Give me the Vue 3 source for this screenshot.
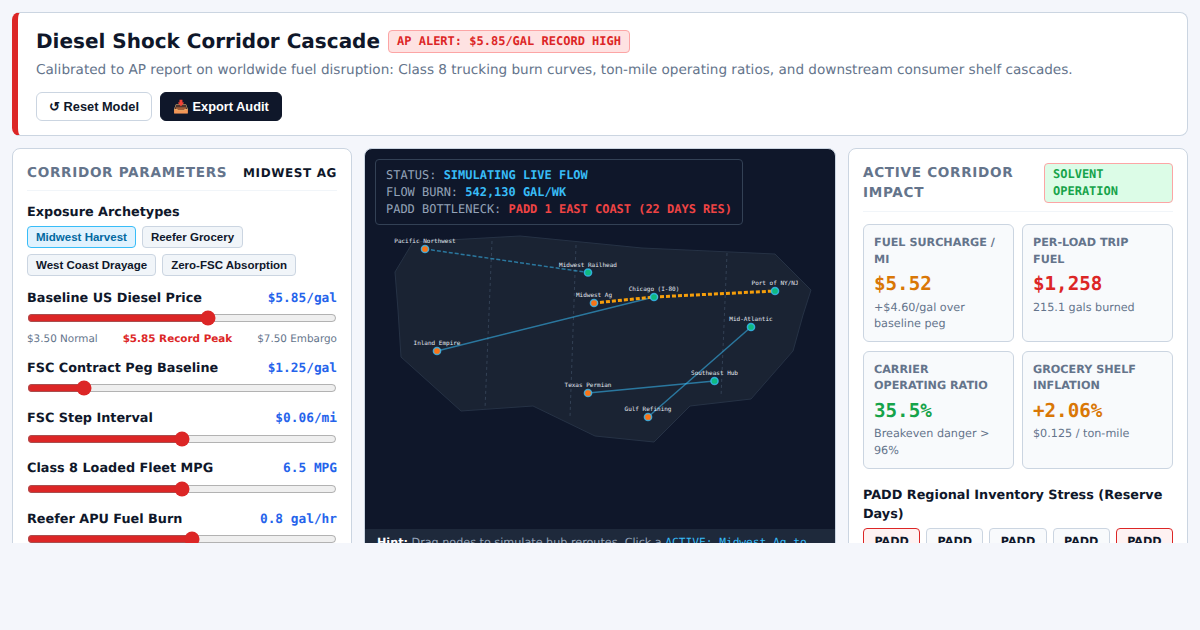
<script setup>
import { ref } from 'vue'

const W = 470
const H = 380

const chips = ['Midwest Harvest', 'Reefer Grocery', 'West Coast Drayage', 'Zero-FSC Absorption']
const activeChip = ref('Midwest Harvest')

const sliders = ref([
  { label: 'Baseline US Diesel Price', value: 5.85, min: 3.5, max: 7.5, step: 0.05, text: '$5.85/gal', scale: true },
  { label: 'FSC Contract Peg Baseline', value: 1.25, min: 1, max: 2.5, step: 0.05, text: '$1.25/gal' },
  { label: 'FSC Step Interval', value: 0.06, min: 0.02, max: 0.1, step: 0.01, text: '$0.06/mi' },
  { label: 'Class 8 Loaded Fleet MPG', value: 6.5, min: 5, max: 8, step: 0.1, text: '6.5 MPG' },
  { label: 'Reefer APU Fuel Burn', value: 0.8, min: 0, max: 1.5, step: 0.1, text: '0.8 gal/hr' },
])

const land = '30,123 48,93 155,87 277,99 410,105 446,141 438,166 428,202 386,250 325,257 289,293 230,287 168,257 96,262 36,208 33,161'
const padds = [
  [127, 92, 120, 260],
  [211, 96, 205, 268],
  [362, 104, 356, 248],
]

const nodes = {
  pnw: { name: 'Pacific Northwest', x: 60, y: 100, hub: false },
  rail: { name: 'Midwest Railhead', x: 223, y: 123.5, hub: true },
  ag: { name: 'Midwest Ag', x: 229, y: 154, hub: false },
  chi: { name: 'Chicago (I-80)', x: 289, y: 148, hub: true },
  port: { name: 'Port of NY/NJ', x: 410, y: 142, hub: true },
  mid: { name: 'Mid-Atlantic', x: 386, y: 178, hub: true },
  inland: { name: 'Inland Empire', x: 72, y: 202, hub: false },
  texas: { name: 'Texas Permian', x: 223, y: 244, hub: false },
  se: { name: 'Southeast Hub', x: 349.5, y: 232, hub: true },
  gulf: { name: 'Gulf Refining', x: 283, y: 268, hub: false },
}

const links = [
  { a: 'pnw', b: 'rail', kind: 'dashed' },
  { a: 'inland', b: 'chi', kind: 'solid' },
  { a: 'texas', b: 'se', kind: 'solid' },
  { a: 'gulf', b: 'mid', kind: 'solid' },
  { a: 'ag', b: 'chi', kind: 'hot' },
  { a: 'chi', b: 'port', kind: 'hot' },
]

const cards = [
  { label: 'Fuel Surcharge / mi', value: '$5.52', sub: '+$4.60/gal over baseline peg', tone: 'amber' },
  { label: 'Per-Load Trip Fuel', value: '$1,258', sub: '215.1 gals burned', tone: 'red' },
  { label: 'Carrier Operating Ratio', value: '35.5%', sub: 'Breakeven danger > 96%', tone: 'green' },
  { label: 'Grocery Shelf Inflation', value: '+2.06%', sub: '$0.125 / ton-mile', tone: 'amber' },
]

const padd = [
  { name: 'PADD 1', hot: true },
  { name: 'PADD 2', hot: false },
  { name: 'PADD 3', hot: false },
  { name: 'PADD 4', hot: false },
  { name: 'PADD 5', hot: true },
]
</script>

<template>
  <div class="page">
    <header class="hero">
      <div class="hero-title">
        <h1>Diesel Shock Corridor Cascade</h1>
        <span class="badge">AP ALERT: $5.85/GAL RECORD HIGH</span>
      </div>
      <p>Calibrated to AP report on worldwide fuel disruption: Class 8 trucking burn curves, ton-mile operating ratios, and downstream consumer shelf cascades.</p>
      <div class="actions">
        <button class="btn">↺ Reset Model</button>
        <button class="btn btn--dark">📥 Export Audit</button>
      </div>
    </header>

    <main class="grid">
      <section class="panel">
        <div class="panel-head">
          <h2>Corridor Parameters</h2>
          <span class="scenario">MIDWEST AG</span>
        </div>
        <div class="sub-title">Exposure Archetypes</div>
        <div class="chips">
          <button
            v-for="c in chips"
            :key="c"
            class="chip"
            :class="{ 'chip--on': c === activeChip }"
            @click="activeChip = c"
          >{{ c }}</button>
        </div>
        <div v-for="s in sliders" :key="s.label" class="slider">
          <div class="slider-top">
            <span>{{ s.label }}</span>
            <b>{{ s.text }}</b>
          </div>
          <input v-model.number="s.value" type="range" :min="s.min" :max="s.max" :step="s.step" />
          <div v-if="s.scale" class="scale">
            <span>$3.50 Normal</span>
            <strong>$5.85 Record Peak</strong>
            <span>$7.50 Embargo</span>
          </div>
        </div>
      </section>

      <section class="panel panel--map">
        <div class="canvas">
          <svg class="map" :viewBox="`0 0 ${W} ${H}`" :width="W" :height="H">
            <polygon :points="land" class="land" />
            <line
              v-for="(p, i) in padds"
              :key="i"
              :x1="p[0]" :y1="p[1]" :x2="p[2]" :y2="p[3]"
              class="padd-line"
            />
            <line
              v-for="(l, i) in links"
              :key="i"
              :x1="nodes[l.a].x" :y1="nodes[l.a].y" :x2="nodes[l.b].x" :y2="nodes[l.b].y"
              :class="`link link--${l.kind}`"
            />
            <g v-for="n in nodes" :key="n.name">
              <circle :cx="n.x" :cy="n.y" r="3.6" class="node" :class="{ 'node--hub': n.hub }" />
              <text :x="n.x" :y="n.y - 6" class="node-label">{{ n.name }}</text>
            </g>
          </svg>
          <div class="hud">
            <div>STATUS: <b class="cyan">SIMULATING LIVE FLOW</b></div>
            <div>FLOW BURN: <b class="cyan">542,130 GAL/WK</b></div>
            <div>PADD BOTTLENECK: <b class="hot">PADD 1 EAST COAST (22 DAYS RES)</b></div>
          </div>
        </div>
        <div class="hint">
          <strong>Hint:</strong> Drag nodes to simulate hub reroutes. Click a <code>ACTIVE: Midwest Ag to Chicago</code> link to toggle it.
        </div>
      </section>

      <section class="panel">
        <div class="panel-head">
          <h2>Active Corridor Impact</h2>
          <span class="badge badge--ok">SOLVENT OPERATION</span>
        </div>
        <div class="cards">
          <div v-for="c in cards" :key="c.label" class="card">
            <div class="card-label">{{ c.label }}</div>
            <div class="card-value" :class="`tone-${c.tone}`">{{ c.value }}</div>
            <div class="card-sub">{{ c.sub }}</div>
          </div>
        </div>
        <div class="sub-title sub-title--padd">PADD Regional Inventory Stress (Reserve Days)</div>
        <div class="padds">
          <div v-for="p in padd" :key="p.name" class="padd" :class="{ 'padd--hot': p.hot }">{{ p.name }}</div>
        </div>
      </section>
    </main>
  </div>
</template>

<style>
html, body {
  margin: 0;
  background: #f4f6fb;
}
</style>

<style scoped>
.page {
  padding: 12px;
  height: 630px;
  box-sizing: border-box;
  font-family: "DejaVu Sans", sans-serif;
  color: #0f172a;
  text-rendering: geometricPrecision;
}

.hero {
  background: #fff;
  border: 1px solid #cbd5e1;
  border-left: 6px solid #dc2626;
  border-radius: 8px;
  padding: 16px 18px 14px;
  height: 124px;
  box-sizing: border-box;
}
.hero-title {
  display: flex;
  align-items: center;
  gap: 8px;
}
h1 {
  margin: 0;
  font-size: 20px;
  line-height: 24px;
  font-weight: 700;
}
.hero p {
  margin: 7px 0 12px;
  font-size: 13.6px;
  line-height: 20px;
  color: #64748b;
}
.badge {
  font-family: "DejaVu Sans Mono", monospace;
  font-size: 12px;
  font-weight: 700;
  line-height: 17px;
  padding: 2px 8px;
  color: #dc2626;
  background: #fee2e2;
  border: 1px solid #fca5a5;
  border-radius: 4px;
}
.badge--ok {
  color: #16a34a;
  background: #dcfce7;
  flex: 0 0 129px;
  box-sizing: border-box;
}
.actions {
  display: flex;
  gap: 8px;
}
.btn {
  font-family: "Liberation Sans", Arial, sans-serif;
  font-size: 12.8px;
  font-weight: 700;
  height: 29px;
  padding: 0 12px;
  color: #0f172a;
  background: #fff;
  border: 1px solid #cbd5e1;
  border-radius: 6px;
}
.btn--dark {
  color: #fff;
  background: #0f172a;
  border-color: #0f172a;
}

.grid {
  display: grid;
  grid-template-columns: 340px 1fr 340px;
  gap: 12px;
  margin-top: 12px;
  height: 395px;
  overflow: hidden;
}
.panel {
  background: #fff;
  border: 1px solid #cbd5e1;
  border-radius: 8px;
  padding: 14px;
  min-width: 0;
}
.panel-head {
  display: flex;
  justify-content: space-between;
  align-items: center;
  gap: 12px;
  padding-bottom: 7px;
  margin-bottom: 12px;
  border-bottom: 1px solid #f1f5f9;
}
h2 {
  margin: 0;
  font-size: 13.6px;
  line-height: 20.4px;
  font-weight: 700;
  letter-spacing: 0.05em;
  text-transform: uppercase;
  color: #64748b;
}
.scenario {
  font-size: 12px;
  font-weight: 700;
  letter-spacing: 0.05em;
  white-space: nowrap;
  color: #0f172a;
}
.sub-title {
  font-size: 12.8px;
  line-height: 19.2px;
  font-weight: 700;
}
.chips {
  display: flex;
  flex-wrap: wrap;
  gap: 6px;
  margin: 3px 0 13px;
}
.chip {
  font-family: "Liberation Sans", Arial, sans-serif;
  font-size: 11.52px;
  font-weight: 700;
  height: 22px;
  padding: 0 8px;
  color: #0f172a;
  background: #f1f5f9;
  border: 1px solid #cbd5e1;
  border-radius: 4px;
}
.chip--on {
  color: #0369a1;
  background: #e0f2fe;
  border-color: #38bdf8;
}
.slider {
  margin-bottom: 12.7px;
}
.slider-top {
  display: flex;
  justify-content: space-between;
  align-items: center;
  font-size: 12.8px;
  line-height: 19.2px;
  font-weight: 700;
}
.slider-top b {
  font-family: "DejaVu Sans Mono", monospace;
  font-size: 12.8px;
  color: #2563eb;
}
.slider input {
  display: block;
  width: 100%;
  height: 16px;
  margin: 2.5px 0 0;
  accent-color: #dc2626;
}
.scale {
  display: flex;
  justify-content: space-between;
  margin: 5.9px 0 -1.9px;
  font-size: 10.4px;
  line-height: 15.6px;
  color: #64748b;
}
.scale strong {
  color: #dc2626;
}

.panel--map {
  padding: 0;
  background: #0f172a;
  overflow: hidden;
}
.canvas {
  position: relative;
  height: 380px;
}
.map {
  position: absolute;
  inset: 0;
  display: block;
}
.land {
  fill: #1a2333;
  stroke: #263245;
  stroke-width: 1;
}
.padd-line {
  stroke: #334155;
  stroke-width: 1;
  stroke-dasharray: 3 3;
}
.link {
  stroke: #38bdf8;
  stroke-opacity: 0.55;
  stroke-width: 1.5;
}
.link--dashed {
  stroke-dasharray: 4 2;
}
.link--hot {
  stroke: #f59e0b;
  stroke-opacity: 1;
  stroke-width: 3;
  stroke-dasharray: 4 2;
}
.node {
  fill: #f97316;
  stroke: #38bdf8;
  stroke-opacity: 0.8;
  stroke-width: 1.5;
}
.node--hub {
  fill: #10b981;
}
.node-label {
  font-family: "DejaVu Sans Mono", monospace;
  font-size: 6px;
  fill: #e2e8f0;
  text-anchor: middle;
}
.hud {
  position: absolute;
  top: 10px;
  left: 10px;
  padding: 7px 10px 6.4px;
  font-family: "DejaVu Sans Mono", monospace;
  font-size: 11.97px;
  line-height: 16.8px;
  color: #94a3b8;
  background: rgba(15, 23, 42, 0.85);
  border: 1px solid #334155;
  border-radius: 4px;
}
.cyan {
  color: #38bdf8;
}
.hot {
  color: #ef4444;
}
.hint {
  background: #1e293b;
  padding: 6px 12px;
  font-size: 11.2px;
  line-height: 16.8px;
  color: #94a3b8;
}
.hint strong {
  color: #fff;
}
.hint code {
  font-family: "DejaVu Sans Mono", monospace;
  color: #38bdf8;
}

.cards {
  display: grid;
  grid-template-columns: 1fr 1fr;
  gap: 8.5px 8px;
}
.card {
  padding: 10px 10px 8.5px;
  background: #f8fafc;
  border: 1px solid #cbd5e1;
  border-radius: 6px;
}
.card-label {
  font-size: 11.2px;
  line-height: 16.8px;
  font-weight: 700;
  text-transform: uppercase;
  color: #64748b;
}
.card-value {
  font-family: "DejaVu Sans Mono", monospace;
  font-size: 19.2px;
  line-height: 28.8px;
  font-weight: 700;
  margin: 2px 0 0.5px;
}
.card-sub {
  font-size: 11.2px;
  line-height: 16.4px;
  color: #64748b;
}
.tone-amber {
  color: #d97706;
}
.tone-red {
  color: #dc2626;
}
.tone-green {
  color: #16a34a;
}
.sub-title--padd {
  margin-top: 17.5px;
}
.padds {
  display: grid;
  grid-template-columns: repeat(5, 1fr);
  gap: 6px;
  margin-top: 3px;
}
.padd {
  padding: 5px 8px;
  text-align: center;
  font-size: 11.2px;
  line-height: 16.8px;
  font-weight: 700;
  background: #f8fafc;
  border: 1px solid #cbd5e1;
  border-radius: 4px;
}
.padd--hot {
  background: #fef2f2;
  border-color: #dc2626;
}
</style>
